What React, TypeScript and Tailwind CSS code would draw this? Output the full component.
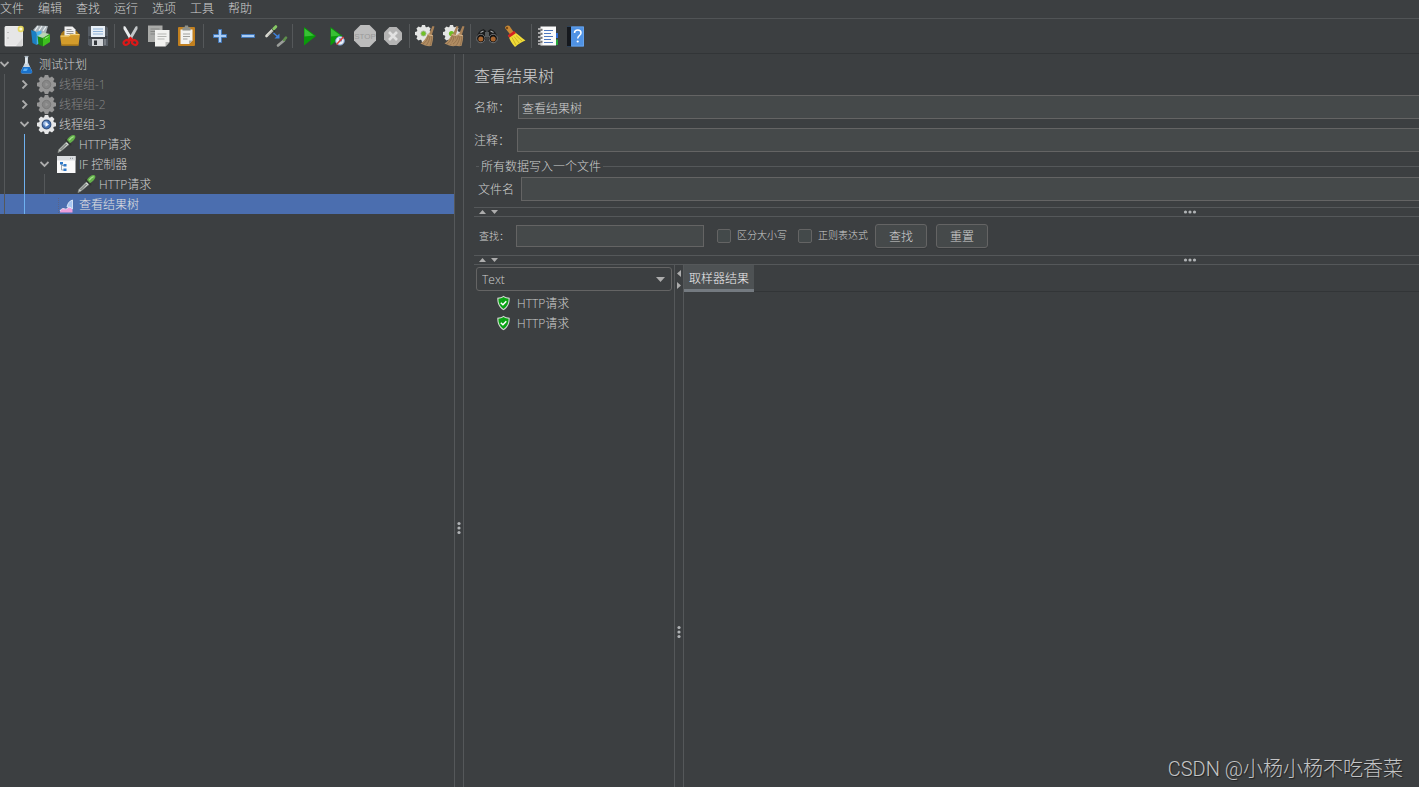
import type { ReactNode } from "react";
import { clsx } from "clsx";

const MENUS = ["文件", "编辑", "查找", "运行", "选项", "工具", "帮助"];

const GEAR_ANGLES = [0, 45, 90, 135, 180, 225, 270, 315];

function Svg({ size = 24, children }: { size?: number; children: ReactNode }) {
  return (
    <svg width={size} height={size} viewBox={`0 0 ${size} ${size}`} aria-hidden="true" className="shrink-0">
      {children}
    </svg>
  );
}

/* ---------- shared icon parts ---------- */

function Gear({ cx, cy, r, fill }: { cx: number; cy: number; r: number; fill: string }) {
  return (
    <g fill={fill}>
      <circle cx={cx} cy={cy} r={r * 0.8} />
      {GEAR_ANGLES.map((a) => (
        <path
          key={a}
          d={`M${cx - r * 0.3} ${cy - r * 0.6}L${cx - r * 0.18} ${cy - r}H${cx + r * 0.18}L${cx + r * 0.3} ${cy - r * 0.6}Z`}
          transform={`rotate(${a} ${cx} ${cy})`}
        />
      ))}
    </g>
  );
}

function Straw({ x }: { x: number }) {
  return (
    <g transform={`translate(${x} 0)`}>
      <path d="M18.5 2l2 .5-3 9.500-3-.8z" fill="#a98258" />
      <path d="M14 9.500l5 1.500c.5 3-.5 7-1.500 11-4 .5-7-.5-11-2.500 3.500-2.500 6-5.500 7.500-10z" fill="#b08c62" />
      <path d="M14.500 11.500c-1 4-3 7-5.500 8.500M16 12c-.5 4-2 7-3.500 9M17.800 12c0 4-.8 7-1.800 9.500" stroke="#8a6846" strokeWidth=".7" fill="none" />
      <path d="M13.800 10.500l5 1.300" stroke="#d6b58b" strokeWidth="1" />
    </g>
  );
}

function Pipette() {
  return (
    <g>
      <path d="M2 18.500l1-3 8-8 2.500 2.500-8.500 7z" fill="#cfd3cf" stroke="#8b908c" strokeWidth=".8" />
      <path d="M4.500 16l6-6" stroke="#4d544e" strokeWidth="1" />
      <path d="M10 6l4.500 4.500" stroke="#30352f" strokeWidth="1.800" strokeLinecap="round" />
      <path d="M11 6c1-2.500 4-4.700 6-5 2-.2 2.800 1.200 2.200 2.800-.8 2-2.700 4.200-5.200 5.500z" fill="#63b04a" />
      <path d="M13.500 5.800c1-1.500 2.300-2.600 3.700-3" stroke="#a5e08c" strokeWidth="1.300" fill="none" strokeLinecap="round" />
    </g>
  );
}

/* ---------- toolbar icons ---------- */

const NewIcon = () => (
  <Svg>
    <rect x="3" y="2.500" width="17.500" height="19.500" rx=".8" fill="#e6e6e6" stroke="#fff" strokeWidth=".8" />
    <path d="M5.500 8.500h1M5.500 14h1" stroke="#999" strokeWidth="1" />
    <path d="M14 22l6.500-8v8z" fill="#d6d6d6" />
    <circle cx="18.800" cy="5" r="3.200" fill="#e6d545" fillOpacity=".8" />
    <circle cx="18.800" cy="5" r="1.500" fill="#fffbd0" />
  </Svg>
);

const TemplatesIcon = () => (
  <Svg>
    <path d="M3 6l4-4.500 11 .5-2 7-8 2z" fill="#aab3b8" />
    <path d="M5 6.500l3-4.500M9 6.500l3-4.500M13 7l3-4.500" stroke="#eef2f4" strokeWidth="1.200" />
    <path d="M1 6l5.500 2v13L2.500 19z" fill="#1a7fc4" />
    <path d="M6.500 8l5-1.500V18l-5 3z" fill="#49b3ee" />
    <path d="M7.500 12l5.500 2v8.500L8.500 20.500z" fill="#1e8a12" />
    <path d="M7.500 12l6-3.500 6 1.500-6.500 4z" fill="#b9d6b3" />
    <path d="M13 14l7-4v8l-7 4.500z" fill="#3ec11f" />
    <path d="M15 14.500l3.500-2" stroke="#a4ed8f" strokeWidth="1" />
  </Svg>
);

const OpenIcon = () => (
  <Svg>
    <path d="M3 9.500l2.500-2.500h13l2.500 3v6H3z" fill="#a97a1b" />
    <path d="M6.500 2.500h8l3 3V14h-11z" fill="#f1f1f1" />
    <path d="M8.500 5.500h5M8.500 7.500h7M8.500 9.500h7" stroke="#8c8c8c" strokeWidth=".9" />
    <path d="M2 11.500h8.500l2-1.500h9.500L20.500 21.500h-17z" fill="#d39c2b" />
    <path d="M2.800 12.100h8l2-1.500h8.300" stroke="#f6d784" strokeWidth="1" fill="none" />
    <path d="M3.500 21h17" stroke="#a97a1b" strokeWidth="1.400" />
  </Svg>
);

const SaveIcon = () => (
  <Svg>
    <path d="M2 2.500h18.500L22 4v18H3.500L2 20.500z" fill="#565c63" />
    <path d="M2.500 12h19v3h-19z" fill="#3b4046" />
    <rect x="5" y="2" width="14" height="11" fill="#e9f0f7" />
    <path d="M7 5h10M7 7.500h10M7 10h10" stroke="#8fb2d8" strokeWidth="1.100" />
    <rect x="6" y="15" width="11" height="7" fill="#d2d5d8" />
    <rect x="8" y="16.500" width="3" height="4.500" fill="#34383c" />
    <path d="M19 15v6" stroke="#9aa0a6" />
  </Svg>
);

const CutIcon = () => (
  <Svg>
    <path d="M4.500 2.500c1-.7 2 0 2.500 1l7 12-2.500 1.500L4.500 5z" fill="#e9ebec" />
    <path d="M18.500 2.500c-1-.7-2 0-2.500 1l-7 12 2.500 1.500L18.500 5z" fill="#c3c7c9" />
    <ellipse cx="7.300" cy="18.500" rx="2.800" ry="2.200" fill="none" stroke="#dc1818" strokeWidth="2.200" transform="rotate(-30 7.300 18.500)" />
    <ellipse cx="15.700" cy="18.500" rx="2.800" ry="2.200" fill="none" stroke="#dc1818" strokeWidth="2.200" transform="rotate(30 15.700 18.500)" />
    <path d="M8.500 15.500l3-3 3 3-3 2z" fill="#dc1818" />
  </Svg>
);

const CopyIcon = () => (
  <Svg>
    <rect x="1" y="1.500" width="14.500" height="16.500" fill="#a9aaa8" />
    <path d="M3.500 5h9M3.500 7.500h9M3.500 10h6" stroke="#858684" strokeWidth="1" />
    <path d="M8 6h14.500v12l-4 4.500H8z" fill="#f2f2f0" />
    <path d="M18.500 22.500v-4.500h4z" fill="#b5b6b3" />
    <path d="M10.500 10h9M10.500 12.500h9M10.500 15h7" stroke="#b4b5b2" strokeWidth="1" />
  </Svg>
);

const PasteIcon = () => (
  <Svg>
    <rect x="3" y="3" width="17" height="19" rx="1" fill="#c2801f" />
    <path d="M5.500 5.500h12v11l-3.500 3.500H5.500z" fill="#f3f3f1" />
    <path d="M14 20v-3.500h3.500z" fill="#b4b5b2" />
    <path d="M7.500 3.500h2l.5-2h3l.5 2h2v3h-8z" fill="#8d918c" />
    <path d="M8 10h7M8 12.500h7M8 15h4.500" stroke="#9fa09d" strokeWidth="1" />
  </Svg>
);

const PlusIcon = () => (
  <Svg>
    <path d="M10.500 5.500h3v5h5v3h-5v5h-3v-5h-5v-3h5z" fill="#a9cdf5" stroke="#4378b9" strokeWidth="1" />
  </Svg>
);

const MinusIcon = () => (
  <Svg>
    <path d="M5.500 10.500h13v3h-13z" fill="#a9cdf5" stroke="#4378b9" strokeWidth="1" />
  </Svg>
);

const ToggleIcon = () => (
  <Svg>
    <path d="M2.500 12l6.500-6.500" stroke="#dcdcd4" strokeWidth="2.600" strokeLinecap="round" />
    <path d="M4 11.500l5.500-5.500" stroke="#8b8f89" strokeWidth=".7" />
    <path d="M8 4.500l3 3" stroke="#252825" strokeWidth="1.400" />
    <path d="M9.800 4.700l2-2" stroke="#86c765" strokeWidth="3" strokeLinecap="round" />
    <path d="M9.500 9l4 3.500" stroke="#3f83e0" strokeWidth="1.300" />
    <path d="M15.500 9.500v5h-5z" fill="#3f83e0" />
    <path d="M14 21.500l6-5" stroke="#9b9e9a" strokeWidth="2.600" strokeLinecap="round" />
    <path d="M20 16l2-2.300" stroke="#5f8f4c" strokeWidth="2.600" strokeLinecap="round" />
  </Svg>
);

const StartIcon = () => (
  <Svg>
    <path d="M7 3l12 9-12 9.500z" fill="#0a9a0a" />
    <path d="M7.500 4.500l9.500 7-9.500 1z" fill="#38c034" />
  </Svg>
);

const StartNoTimersIcon = () => (
  <Svg>
    <path d="M5.500 3l12 9-12 9.500z" fill="#0a9a0a" />
    <path d="M6 4.500l9.500 7-9.500 1z" fill="#38c034" />
    <circle cx="15" cy="16.800" r="4.300" fill="#e8eef7" stroke="#7fa0d2" strokeWidth="1" />
    <path d="M15 16.800v-2.800M15 16.800h2" stroke="#3b6cb5" strokeWidth="1" />
    <path d="M11.500 20.500l7-7.500" stroke="#d8423a" strokeWidth="1.600" />
  </Svg>
);

const StopIcon = () => (
  <Svg>
    <path d="M7.500 1h9L23 7.500v9L16.500 23h-9L1 16.500v-9z" fill="#bcbcbc" />
    <text x="12" y="15" textAnchor="middle" fontSize="8" fontWeight="400" fontFamily="Liberation Sans, sans-serif" fill="#9a9a9a">
      STOP
    </text>
  </Svg>
);

const ShutdownIcon = () => (
  <Svg>
    <path d="M8.500 3h7L21 8.500v7L15.500 21h-7L3 15.500v-7z" fill="#b4b4b4" />
    <path d="M8 8l8 8M16 8l-8 8" stroke="#e2e2e2" strokeWidth="2.600" />
  </Svg>
);

const ClearIcon = () => (
  <Svg>
    <Gear cx={9.5} cy={9.5} r={8.5} fill="#e4e5e4" />
    <circle cx="9.500" cy="9.500" r="2.600" fill="#6fc126" stroke="#a9b2a4" strokeWidth=".8" />
    <Straw x={0} />
  </Svg>
);

const ClearAllIcon = () => (
  <Svg>
    <Gear cx={9.5} cy={9.5} r={8.5} fill="#e4e5e4" />
    <circle cx="9.500" cy="9.500" r="2.600" fill="#6fc126" />
    <Straw x={-4} />
    <Straw x={2} />
  </Svg>
);

const SearchIcon = () => (
  <Svg>
    <path d="M5.500 6.500l3-1.500 2.500 2v9H1.500c0-4 1-7 4-9.500z" fill="#1b1c1d" />
    <path d="M18.500 6.500l-3-1.500-2.500 2v9h9.500c0-4-1-7-4-9.500z" fill="#1b1c1d" />
    <rect x="10" y="8" width="4" height="5" fill="#55595b" />
    <path d="M5.500 8.500l3-1.500M18.500 8.500l-3-1.500" stroke="#a3a6a8" strokeWidth="1.200" />
    <circle cx="5.800" cy="14.500" r="4.200" fill="#121212" stroke="#85888a" strokeWidth=".8" />
    <circle cx="18.200" cy="14.500" r="4.200" fill="#121212" stroke="#85888a" strokeWidth=".8" />
    <circle cx="5.800" cy="15" r="2.500" fill="#a8652f" />
    <circle cx="18.200" cy="15" r="2.500" fill="#a8652f" />
  </Svg>
);

const BroomIcon = () => (
  <Svg>
    <path d="M2 4c0-2 3-3.500 4.500-2L11 8.500 7.500 11z" fill="#c88936" />
    <circle cx="4" cy="4" r="1.200" fill="#7b4a14" />
    <path d="M5.500 11.500L11.500 8c4 2.500 6.500 5.500 11 8.500-3 1-7 3.500-10.500 6.500-3-3-5.500-7-6.500-11.500z" fill="#f0db38" />
    <path d="M9 13.500l4 7.500M11 12.500l5 6.500M13 11.500l6 5.500" stroke="#c4a91c" strokeWidth=".8" />
    <path d="M5.500 12.500l6.500-4.500" stroke="#d32222" strokeWidth="2.800" />
  </Svg>
);

const FunctionHelperIcon = () => (
  <Svg>
    <rect x="18" y="9" width="4" height="5" fill="#2e6bd0" />
    <rect x="18" y="15.500" width="4" height="5.500" fill="#24a83a" />
    <rect x="4.500" y="2.500" width="15.500" height="19" fill="#fbfbfb" />
    <path d="M8 6.500h9M8 9.500h7M8 12.500h9M8 15.500h7M8 18.500h9" stroke="#4f79bf" strokeWidth="1" />
    <path d="M2 5h4.500M2 9h4.500M2 13h4.500M2 17h4.500M2 20h4.500" stroke="#c9c9c9" strokeWidth="1.600" />
    <path d="M4.500 6h2M4.500 10h2M4.500 14h2M4.500 18h2" stroke="#111" strokeWidth="1" />
  </Svg>
);

const HelpIcon = () => (
  <Svg>
    <rect x="3" y="2.500" width="17" height="20" fill="#4f92e4" />
    <path d="M3 2.500h4v20H3z" fill="#15181d" />
    <path d="M7.500 3h12v19h-12" fill="none" stroke="#6ba6ec" strokeWidth=".8" />
    <path d="M10.500 9c0-4 6.500-4 6.500 0 0 2.500-3.300 2.500-3.300 5.500" fill="none" stroke="#fff" strokeWidth="1.500" />
    <circle cx="13.700" cy="17.500" r="1.100" fill="#fff" />
  </Svg>
);

const TOOL_GROUPS: { label: string; Icon: () => ReactNode }[][] = [
  [
    { label: "新建", Icon: NewIcon },
    { label: "模板", Icon: TemplatesIcon },
    { label: "打开", Icon: OpenIcon },
    { label: "保存", Icon: SaveIcon },
  ],
  [
    { label: "剪切", Icon: CutIcon },
    { label: "复制", Icon: CopyIcon },
    { label: "粘贴", Icon: PasteIcon },
  ],
  [
    { label: "全部展开", Icon: PlusIcon },
    { label: "全部折叠", Icon: MinusIcon },
    { label: "切换", Icon: ToggleIcon },
  ],
  [
    { label: "启动", Icon: StartIcon },
    { label: "不停顿开始", Icon: StartNoTimersIcon },
    { label: "停止", Icon: StopIcon },
    { label: "关闭", Icon: ShutdownIcon },
  ],
  [
    { label: "清除", Icon: ClearIcon },
    { label: "清除全部", Icon: ClearAllIcon },
  ],
  [
    { label: "搜索", Icon: SearchIcon },
    { label: "重置搜索", Icon: BroomIcon },
  ],
  [
    { label: "函数助手", Icon: FunctionHelperIcon },
    { label: "帮助", Icon: HelpIcon },
  ],
];

/* ---------- tree icons ---------- */

const FlaskIcon = () => (
  <Svg size={20}>
    <path d="M9 3h3v5.500l4 8.500c.5 1.500 0 2.500-1.500 2.500h-8C5 19.500 4.500 18.500 5 17l4-8.500z" fill="#c8d4de" />
    <path d="M7 13h7l2 4c.5 1.500 0 2.500-1.500 2.500h-8C5 19.500 4.500 18.500 5 17z" fill="#1a72cc" />
    <path d="M8 14.500h4L10.500 17H7z" fill="#5bb0f4" />
    <path d="M10 4v6" stroke="#fff" strokeWidth="1" />
    <path d="M8.500 2.500h4" stroke="#aab5be" strokeWidth="1.200" />
  </Svg>
);

const ThreadGroupOffIcon = () => (
  <Svg size={20}>
    <Gear cx={10.5} cy={10.5} r={9.5} fill="#969696" />
    <circle cx="10.500" cy="10.500" r="4.200" fill="#868686" stroke="#7b7b7b" strokeWidth="1" />
    <path d="M9.500 8.500l3 2-3 2z" fill="#979797" />
  </Svg>
);

const ThreadGroupIcon = () => (
  <Svg size={20}>
    <Gear cx={10.5} cy={10.5} r={9.5} fill="#e6e7e8" />
    <circle cx="10.500" cy="10.500" r="4.300" fill="#4572b4" stroke="#33517e" strokeWidth="1.200" />
    <circle cx="9.500" cy="9.500" r="2.300" fill="#9dbbe4" />
    <path d="M9.500 8l3.500 2.500-3.500 2.500z" fill="#f4f8fd" />
  </Svg>
);

const SamplerIcon = () => (
  <Svg size={20}>
    <Pipette />
  </Svg>
);

const ControllerIcon = () => (
  <Svg size={20}>
    <rect x="1" y="2" width="18.500" height="17" fill="#fafafa" />
    <rect x="1" y="2" width="18.500" height="4.500" fill="#d9dcdf" />
    <path d="M14 4.300h1M16 4.300h1" stroke="#8b9197" strokeWidth="1" />
    <path d="M5.500 9v7M5.500 11.500h3M5.500 16h3" stroke="#9aa4ae" strokeWidth="1" fill="none" />
    <path d="M4 8h3v2.500H4zM7.500 10h3v2.500h-3zM7.500 14.500h3V17h-3z" fill="#2e79c8" />
  </Svg>
);

const ResultsIcon = () => (
  <Svg size={20}>
    <path d="M2.500 4v15" stroke="#5a6488" strokeWidth="1" strokeDasharray="1 1" />
    <path d="M4 17.500c1-1.500 2-3.500 4-2.500s2.500 0 4-1 2.500-1 4.500 1.500V18.500H4z" fill="#ee9edb" />
    <path d="M4 17c1-1.500 2-3 4-2.200s3 0 4-1 2.500-1 4 .8" fill="none" stroke="#fbe6f6" strokeWidth="1" />
    <path d="M11 13c.5-3 2-6 5.500-7v9c-1.500-1.500-3.500-2.500-5.500-2z" fill="#a7c6f2" stroke="#e9f1fd" strokeWidth=".8" />
  </Svg>
);

const ShieldIcon = () => (
  <Svg size={16}>
    <path d="M8.500 .8c2 1.400 4 1.900 6.200 2 .2 5.500-1.600 10-6.200 12.400C3.900 12.800 2.100 8.300 2.300 2.800 4.500 2.700 6.500 2.200 8.500 .8z" fill="#cfd8cf" />
    <path d="M8.500 2.100c1.700 1.100 3.300 1.600 5.100 1.700 0 4.600-1.500 7.900-5.100 10.100-3.600-2.200-5.100-5.500-5.100-10.100C5.200 3.700 6.800 3.200 8.500 2.100z" fill="#0aa314" />
    <path d="M5.800 7.800l2.100 2L11.300 6.200" fill="none" stroke="#fff" strokeWidth="1.500" />
  </Svg>
);

type TreeRow = {
  label: string;
  /* one entry per ancestor level, left to right */
  guides: ("none" | "line" | "active")[];
  Icon: () => ReactNode;
  toggle?: "open" | "closed";
  disabled?: boolean;
  selected?: boolean;
};

const TREE: TreeRow[] = [
  { label: "测试计划", guides: [], Icon: FlaskIcon, toggle: "open" },
  { label: "线程组-1", guides: ["line"], Icon: ThreadGroupOffIcon, toggle: "closed", disabled: true },
  { label: "线程组-2", guides: ["line"], Icon: ThreadGroupOffIcon, toggle: "closed", disabled: true },
  { label: "线程组-3", guides: ["line"], Icon: ThreadGroupIcon, toggle: "open" },
  { label: "HTTP请求", guides: ["line", "active"], Icon: SamplerIcon },
  { label: "IF 控制器", guides: ["line", "active"], Icon: ControllerIcon, toggle: "open" },
  { label: "HTTP请求", guides: ["line", "active", "line"], Icon: SamplerIcon },
  { label: "查看结果树", guides: ["line", "active"], Icon: ResultsIcon, selected: true },
];

function Tree() {
  return (
    <ul role="tree" aria-label="测试计划">
      {TREE.map((row, i) => (
        <li
          key={i}
          role="treeitem"
          aria-level={row.guides.length + 1}
          aria-selected={!!row.selected}
          className={clsx(
            "flex h-5 items-center",
            row.selected && "bg-[#4b6eaf] text-[#e0e0e0]",
            row.disabled && "text-[#858585]"
          )}
        >
          {row.guides.map((g, level) => (
            <span key={level} className="flex h-5 w-5 shrink-0 pl-1">
              <span className={clsx("w-px", g === "line" && "bg-[#55585a]", g === "active" && "bg-[#6fb1f0]")} />
            </span>
          ))}
          <span className="flex w-4 shrink-0">
            {row.toggle && (
              <button type="button" aria-label={row.toggle === "open" ? "折叠" : "展开"}>
                <svg width="9" height="9" viewBox="0 0 9 9" fill="none" stroke="#adadad" strokeWidth="1.8">
                  <path d={row.toggle === "open" ? "M.5 2l4 4 4-4" : "M2.500 .5l4 4-4 4"} />
                </svg>
              </button>
            )}
          </span>
          <row.Icon />
          <span className="pt-0.5 pl-[3px]">{row.label}</span>
        </li>
      ))}
    </ul>
  );
}

/* ---------- split pane dividers ---------- */

function Grip({ vertical }: { vertical?: boolean }) {
  return vertical ? (
    <svg width="4" height="14" viewBox="0 0 4 14" fill="#b0b3b5" className="shrink-0">
      <circle cx="2" cy="2.500" r="1.600" />
      <circle cx="2" cy="7" r="1.600" />
      <circle cx="2" cy="11.500" r="1.600" />
    </svg>
  ) : (
    <svg width="14" height="4" viewBox="0 0 14 4" fill="#b0b3b5" className="shrink-0">
      <circle cx="2.500" cy="2" r="1.600" />
      <circle cx="7" cy="2" r="1.600" />
      <circle cx="11.500" cy="2" r="1.600" />
    </svg>
  );
}

function HorizontalDivider() {
  return (
    <div role="separator" className="flex h-2.5 items-center border-y border-[#55585a]">
      <div className="flex flex-[76] gap-[5px] pl-[5px]">
        <svg width="7" height="4" viewBox="0 0 7 4" fill="#adadad">
          <path d="M0 4L3.500 0 7 4z" />
        </svg>
        <svg width="7" height="4" viewBox="0 0 7 4" fill="#adadad">
          <path d="M0 0L3.500 4 7 0z" />
        </svg>
      </div>
      <Grip />
      <div className="flex-[24]" />
    </div>
  );
}

const FIELD = "border border-[#646464] bg-[#45494a] pt-0.5 outline-none";
const BUTTON =
  "h-6 w-[52px] rounded-[3px] border border-[#646464] bg-[#45494a] pt-0.5 leading-none shadow-[0_1px_0_#36393b]";
const CHECKBOX = "size-3.5 shrink-0 appearance-none rounded-[2px] border border-[#646464] bg-[#43494a]";

function ResultsPanel() {
  return (
    <main className="flex min-w-0 flex-1 flex-col pl-2.5">
      <h1 className="mt-3 text-base leading-5">查看结果树</h1>

      <div className="mt-[9px] flex items-center">
        <label htmlFor="name" className="w-11 shrink-0 pt-0.5">名称：</label>
        <input id="name" defaultValue="查看结果树" className={clsx(FIELD, "h-6 min-w-0 flex-1 border-r-0 px-[3px]")} />
      </div>
      <div className="mt-[9px] flex items-center">
        <label htmlFor="comment" className="w-[43px] shrink-0 pt-0.5">注释：</label>
        <input id="comment" className={clsx(FIELD, "h-6 min-w-0 flex-1 border-r-0 px-[3px]")} />
      </div>

      <section aria-labelledby="file-group" className="mt-1">
        <div className="flex h-5 items-center gap-0.5 pl-0.5">
          <span className="h-px w-[3px] bg-[#55585a]" />
          <h2 id="file-group" className="pt-0.5">所有数据写入一个文件</h2>
          <span className="h-px flex-1 bg-[#55585a]" />
        </div>
        <div className="mt-px flex items-center pl-1">
          <label htmlFor="filename" className="w-[43px] shrink-0 pt-0.5">文件名</label>
          <input id="filename" className={clsx(FIELD, "h-6 min-w-0 flex-1 border-r-0 px-[3px]")} />
        </div>
      </section>

      <div className="mt-1.5">
        <HorizontalDivider />
      </div>

      <form className="flex h-[38px] items-center pl-[5px]" onSubmit={(e) => e.preventDefault()}>
        <label htmlFor="search" className="w-[37px] shrink-0 pt-0.5 text-[10px]">查找：</label>
        <input id="search" className={clsx(FIELD, "h-[22px] w-[188px] px-[3px]")} />
        <div className="ml-[13px] flex items-center gap-[11px] text-[10px]">
          <label className="flex items-center gap-1.5">
            <input type="checkbox" className={CHECKBOX} />
            区分大小写
          </label>
          <label className="flex items-center gap-1.5">
            <input type="checkbox" className={CHECKBOX} />
            正则表达式
          </label>
        </div>
        <div className="ml-[7px] flex gap-[9px]">
          <button type="submit" className={BUTTON}>查找</button>
          <button type="reset" className={BUTTON}>重置</button>
        </div>
      </form>

      <HorizontalDivider />

      <div className="flex flex-1">
        <div className="w-[200px] shrink-0 px-0.5 pt-0.5">
          <div className="relative">
            <select aria-label="渲染器" className="h-6 w-full appearance-none rounded-[3px] border border-[#646464] bg-[#3c3f41] px-[5px] pt-0.5 outline-none">
              <option>Text</option>
            </select>
            <svg width="9" height="5" viewBox="0 0 9 5" fill="#adadad" className="pointer-events-none absolute top-2.5 right-[7px]">
              <path d="M0 0h9L4.500 5z" />
            </svg>
          </div>
          <ul className="mt-0.5">
            {["HTTP请求", "HTTP请求"].map((label, i) => (
              <li key={i} className="flex h-5 items-center gap-[6px] pl-[19px]">
                <ShieldIcon />
                <span className="pt-0.5">{label}</span>
              </li>
            ))}
          </ul>
        </div>

        <div role="separator" className="flex w-2.5 shrink-0 flex-col items-center border-x border-[#55585a]">
          <div className="flex flex-[141] flex-col items-center gap-[5px] pt-[5px]">
            <svg width="4" height="7" viewBox="0 0 4 7" fill="#adadad">
              <path d="M4 0v7L0 3.500z" />
            </svg>
            <svg width="4" height="7" viewBox="0 0 4 7" fill="#adadad">
              <path d="M0 0v7L4 3.500z" />
            </svg>
          </div>
          <Grip vertical />
          <div className="flex-[59]" />
        </div>

        <div className="min-w-0 flex-1">
          <div role="tablist" className="flex h-[27px] border-b border-[#323537]">
            <button
              type="button"
              role="tab"
              aria-selected="true"
              className="h-[27px] border-b-3 border-[#747a80] bg-[#4e5254] px-[5px] pt-1 text-[#eeeeee]"
            >
              取样器结果
            </button>
          </div>
        </div>
      </div>
    </main>
  );
}

export default function App() {
  return (
    <div className="relative flex min-h-screen flex-col overflow-hidden bg-[#3c3f41] font-['Open_Sans','Noto_Sans_CJK_SC',sans-serif] text-xs font-light text-[#d0d0d0]">
      <nav className="flex h-[19px] items-center gap-3.5 border-b border-[#515456]">
        {MENUS.map((m) => (
          <button key={m} type="button" className="leading-4">
            {m}
          </button>
        ))}
      </nav>

      <div role="toolbar" className="flex h-[35px] items-center border-b border-[#323537]">
        {TOOL_GROUPS.map((group, i) => (
          <div key={i} className="flex items-center">
            {i > 0 && <span className="mx-0.5 h-6 w-px bg-[#55585a]" />}
            {group.map(({ label, Icon }) => (
              <button key={label} type="button" aria-label={label} className="flex w-7 justify-center">
                <Icon />
              </button>
            ))}
          </div>
        ))}
      </div>

      <div className="flex flex-1">
        <aside className="w-[454px] shrink-0">
          <Tree />
        </aside>
        <div role="separator" className="flex w-2.5 shrink-0 flex-col items-center border-x border-[#55585a]">
          <div className="flex-[65]" />
          <Grip vertical />
          <div className="flex-[35]" />
        </div>
        <ResultsPanel />
      </div>

      <p className="pointer-events-none absolute right-4 bottom-1 font-['Roboto','Noto_Sans_CJK_SC',sans-serif] text-xl text-[#c4c5c6] [text-shadow:1px_1px_1px_#222]">
        CSDN @小杨小杨不吃香菜
      </p>
    </div>
  );
}
